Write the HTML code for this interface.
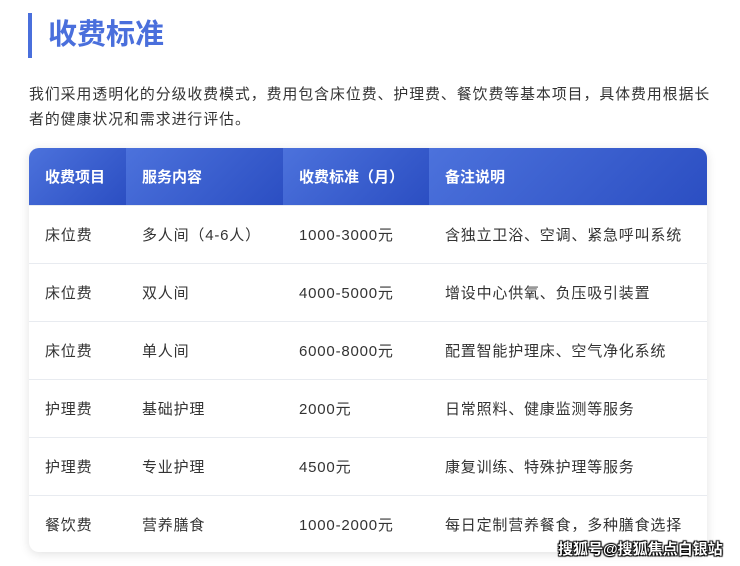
<!DOCTYPE html>
<html><head><meta charset="utf-8"><style>
body{margin:0;background:#fff;width:740px;height:566px;overflow:hidden;font-family:"Liberation Sans","Noto Sans CJK SC",sans-serif;position:relative}
.bar{position:absolute;left:28px;top:13px;width:4px;height:45px;background:#4a6fdc}
.title{position:absolute;left:48px;top:15px;font-size:29px;font-weight:bold;color:#4a6fdc;line-height:40px}
.p{position:absolute;left:29px;top:83px;width:700px;font-size:14.85px;letter-spacing:1px;line-height:25px;color:#333}
.tbl{position:absolute;left:29px;top:148px;width:678px;height:404px;border-radius:10px;overflow:hidden;box-shadow:0 2px 10px rgba(0,0,0,.12);background:#fff}
table{border-collapse:collapse;width:100%}
th{height:57px;color:#fff;font-size:15px;font-weight:bold;text-align:left;padding:0 0 0 16px;background:linear-gradient(135deg,#4c72dc,#2b4ec2)}
td{height:57px;border-top:1px solid #e8ebf0;font-size:15px;letter-spacing:0.8px;color:#333;padding:0 0 0 16px}
.wm{position:absolute;left:558px;top:538px;font-size:15px;font-weight:bold;color:#fff;text-shadow:0 0 1px #000,1px 1px 1px #000,-1px -1px 1px #000,1px -1px 1px #000,-1px 1px 1px #000}
</style></head><body>
<div class="bar"></div><div class="title">收费标准</div>
<div class="p">我们采用透明化的分级收费模式，费用包含床位费、护理费、餐饮费等基本项目，具体费用根据长<br>者的健康状况和需求进行评估。</div>
<div class="tbl"><table>
<tr><th style="width:81px">收费项目</th><th style="width:141px">服务内容</th><th style="width:130px">收费标准（月）</th><th>备注说明</th></tr>
<tr><td>床位费</td><td>多人间（4-6人）</td><td>1000-3000元</td><td>含独立卫浴、空调、紧急呼叫系统</td></tr>
<tr><td>床位费</td><td>双人间</td><td>4000-5000元</td><td>增设中心供氧、负压吸引装置</td></tr>
<tr><td>床位费</td><td>单人间</td><td>6000-8000元</td><td>配置智能护理床、空气净化系统</td></tr>
<tr><td>护理费</td><td>基础护理</td><td>2000元</td><td>日常照料、健康监测等服务</td></tr>
<tr><td>护理费</td><td>专业护理</td><td>4500元</td><td>康复训练、特殊护理等服务</td></tr>
<tr><td>餐饮费</td><td>营养膳食</td><td>1000-2000元</td><td>每日定制营养餐食，多种膳食选择</td></tr>
</table></div>
<div class="wm">搜狐号@搜狐焦点白银站</div>
</body></html>
